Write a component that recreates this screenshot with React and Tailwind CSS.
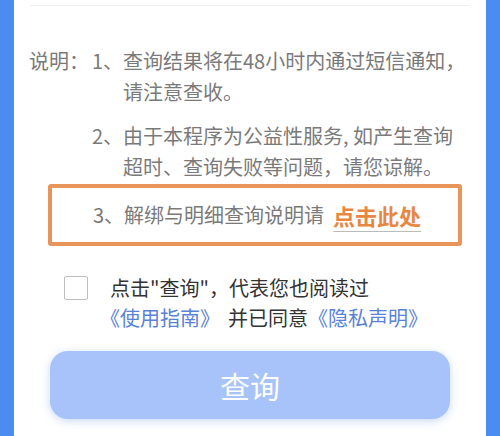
export default function App() {
  return (
    <div
      className="w-[500px] h-[436px] overflow-hidden bg-[#4a8cf0] flex px-[14px]"
      style={{ fontFamily: '"Noto Sans CJK SC", "Noto Sans", sans-serif' }}
    >
      <div className="flex-1 bg-white flex flex-col">
        <div className="mt-[5px] mx-[16px] h-px bg-[#f0f0f0]" />

        {/* notes */}
        <div className="mt-[39px] flex text-[20px] leading-[31px] text-[#7a7a7a]">
          <div className="w-[78px] pl-[15px] shrink-0">说明：</div>
          <div className="flex-1">
            <div className="flex">
              <span className="w-[31px] shrink-0">1、</span>
              <span>查询结果将在48小时内通过短信通知，<br />请注意查收。</span>
            </div>
            <div className="flex mt-[13px]">
              <span className="w-[31px] shrink-0">2、</span>
              <span>由于本程序为公益性服务, 如产生查询<br />超时、查询失败等问题，请您谅解。</span>
            </div>
          </div>
        </div>

        <div className="mt-[2px] ml-[34px] w-[414px] h-[62px] border-4 border-[#e8955a] rounded-[3px] flex items-center pl-[41px] text-[20px] text-[#7a7a7a]">
          <span>3、解绑与明细查询说明请</span>
          <span className="ml-[9px] text-[22px] font-bold text-[#e8873f] underline decoration-[#bbbbbb] decoration-1 underline-offset-[6px]">点击此处</span>
        </div>

        {/* agreement */}
        <div className="mt-[27px] flex pl-[50px]">
          <div className="w-[24px] h-[24px] border border-[#bdbdbd] rounded-[2px] mt-[3px] shrink-0" />
          <div className="ml-[20px] text-[20px] leading-[30px] text-[#333]">
            <div className="pl-[2px]">点击"查询"，代表您也阅读过</div>
            <div className="-ml-[8px]">
              <span className="text-[#5a82d6]">《使用指南》</span>
              <span className="ml-[8px]">并已同意</span>
              <span className="text-[#5a82d6]">《隐私声明》</span>
            </div>
          </div>
        </div>

        <button className="mt-[18px] ml-[36px] w-[400px] h-[68px] rounded-[18px] bg-[#a7c3f9] shadow-[0_2px_8px_rgba(150,180,240,0.5)] text-white text-[30px] flex items-center justify-center">
          查询
        </button>
      </div>
    </div>
  );
}
